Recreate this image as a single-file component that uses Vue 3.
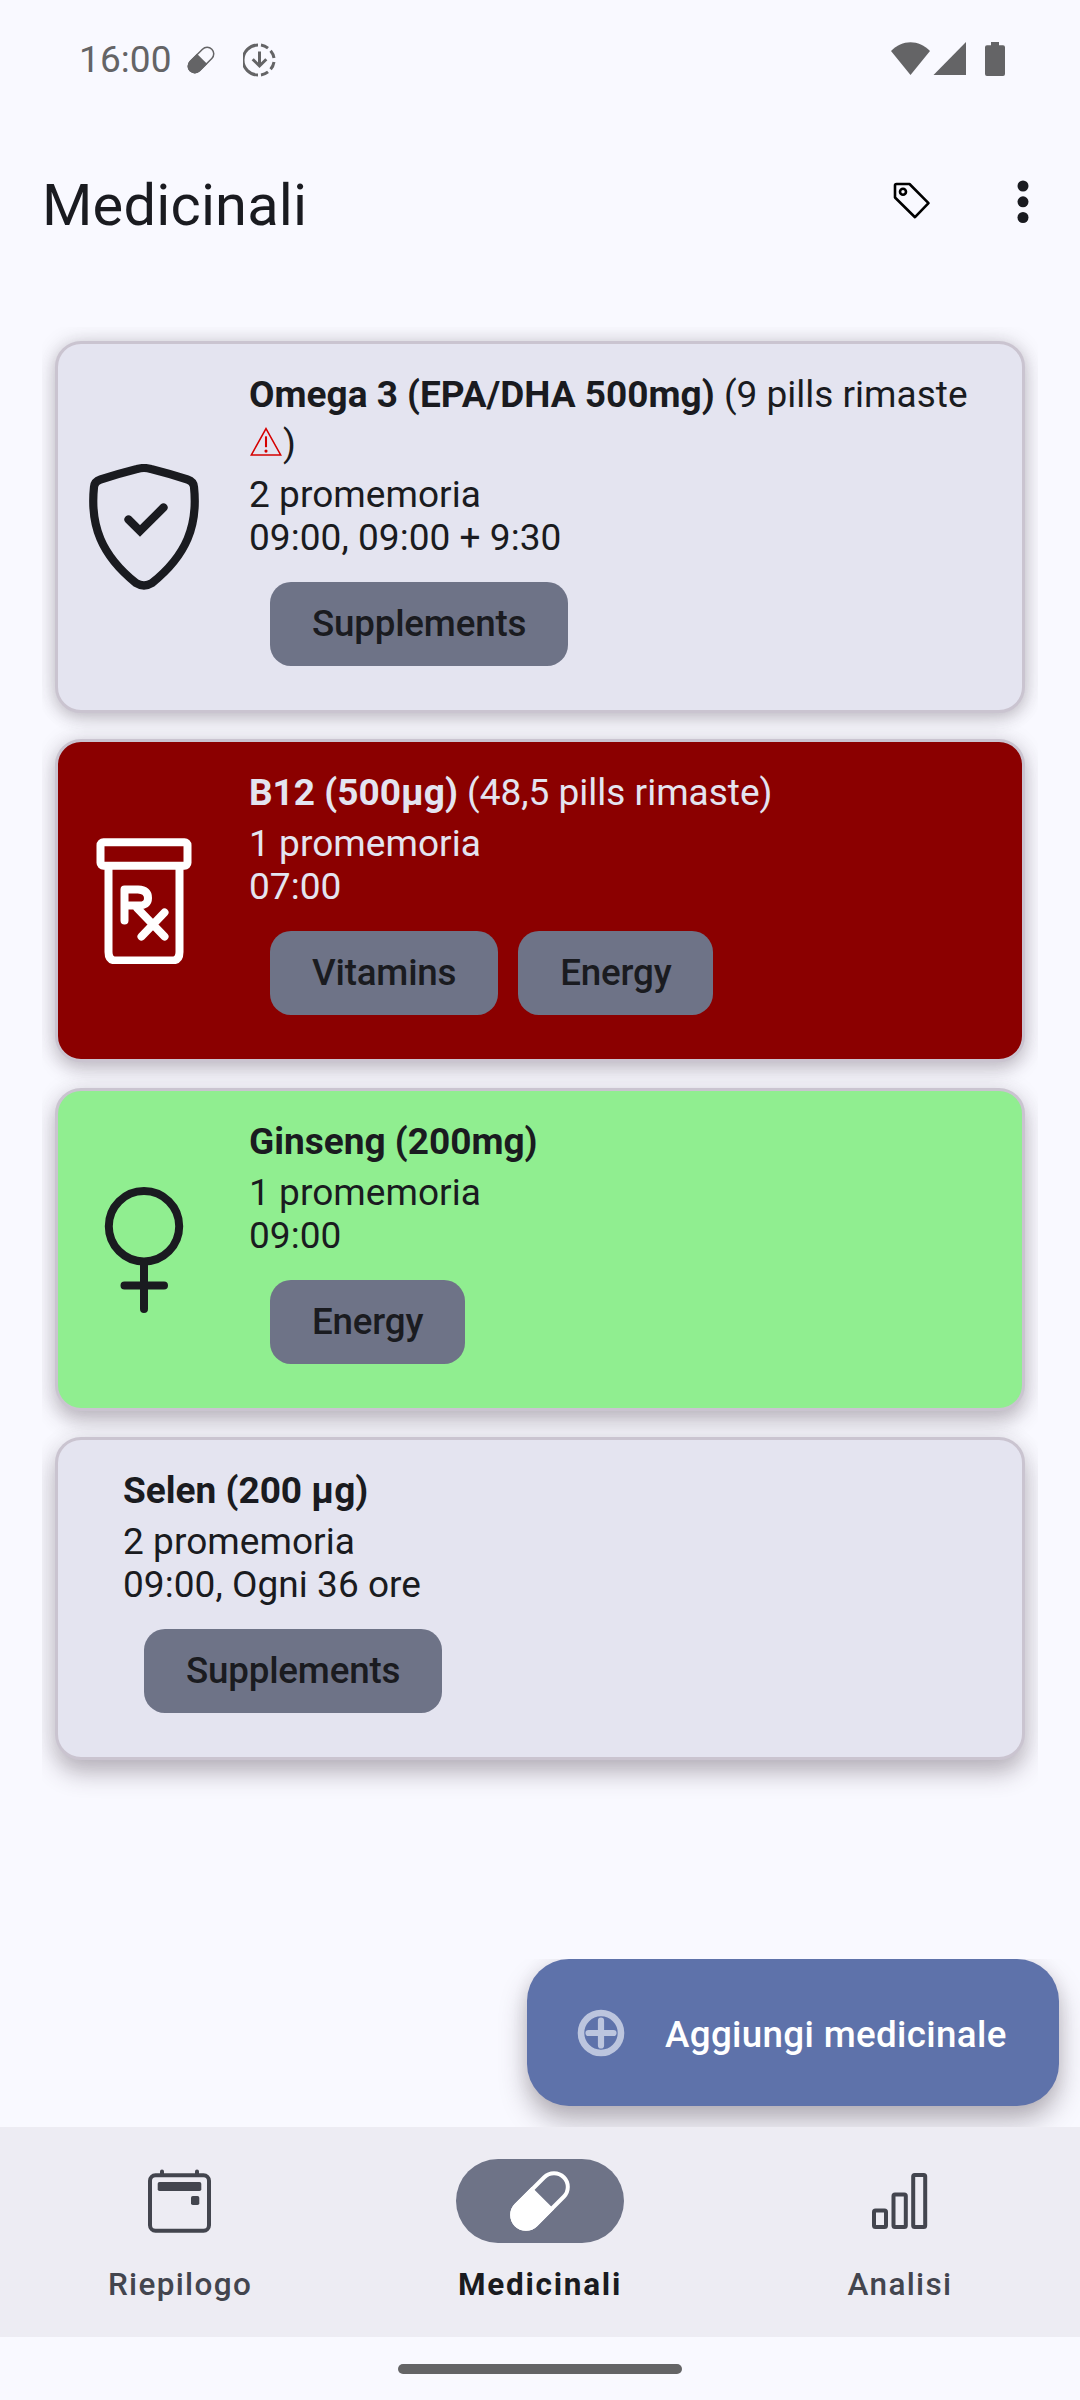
<script setup>
const cards = [
  { name: 'Omega 3 (EPA/DHA 500mg)', stock: ' (9 pills rimaste ', warn: true, count: '2 promemoria', times: '09:00, 09:00 + 9:30', tags: ['Supplements'], icon: 'shield', tone: 'plain' },
  { name: 'B12 (500µg)', stock: ' (48,5 pills rimaste)', count: '1 promemoria', times: '07:00', tags: ['Vitamins', 'Energy'], icon: 'rx', tone: 'red' },
  { name: 'Ginseng (200mg)', stock: '', count: '1 promemoria', times: '09:00', tags: ['Energy'], icon: 'female', tone: 'green' },
  { name: 'Selen (200 µg)', stock: '', count: '2 promemoria', times: '09:00, Ogni 36 ore', tags: ['Supplements'], icon: null, tone: 'plain' },
]
</script>

<template>
  <div class="screen">
    <header class="status">
      <span class="clock">16:00</span>
      <svg class="s-pill" width="28" height="28" viewBox="0 0 28 28">
        <g transform="translate(14 14) rotate(45)">
          <rect x="-6.600" y="-15.300" width="13.200" height="30.600" rx="6.600" fill="none" stroke="#646466" stroke-width="1.500" />
          <path d="M-7.300 -1.500H7.300V8.700A7.300 7.300 0 0 1-7.300 8.700Z" fill="#646466" />
        </g>
      </svg>
      <svg class="s-down" width="33" height="34" viewBox="0 0 33 34" fill="none" stroke="#646466" stroke-width="3">
        <path d="M15 2A15 15 0 0 0 15 32" />
        <path d="M18 2A15 15 0 0 1 25 5.100M27.600 7.700A15 15 0 0 1 31 15M31 19A15 15 0 0 1 27.600 26.300M25 28.900A15 15 0 0 1 18 32" />
        <path d="M16.500 8.500V22M9.700 16.200L16.500 23L23.300 16.200" />
      </svg>
      <span class="grow"></span>
      <svg width="115" height="34" viewBox="0 0 115 34" fill="#646466">
        <path d="M0 9C11 -2.700 28 -2.700 39 9L19.500 33Z" />
        <path d="M42.500 33L75 0V33Z" />
        <path d="M100 0h8v3.200h4a2 2 0 0 1 2 2V32a2 2 0 0 1-2 2H96a2 2 0 0 1-2-2V5.200a2 2 0 0 1 2-2h4Z" />
      </svg>
    </header>

    <div class="appbar">
      <h1>Medicinali</h1>
      <span class="grow"></span>
      <svg class="tag-icon" width="38" height="38" viewBox="0 0 38 38" fill="none" stroke="#000" stroke-width="2.600" stroke-linejoin="round">
        <path d="M3.500 2H16.500L35.500 21.200L22 35.200L2 15.500V3.500Q2 2 3.500 2Z" />
        <circle cx="10" cy="9.700" r="3" />
      </svg>
      <svg width="12" height="44" viewBox="0 0 12 44" fill="#1a1b20">
        <circle cx="6" cy="6" r="5.500" /><circle cx="6" cy="21.800" r="5.500" /><circle cx="6" cy="37.500" r="5.500" />
      </svg>
    </div>

    <main class="list">
      <article v-for="c in cards" :key="c.name" class="card" :class="c.tone">
        <svg v-if="c.icon === 'shield'" class="icon" viewBox="0 0 126 126" fill="none" stroke="#1a1b20" stroke-width="8.200" stroke-linecap="round" stroke-linejoin="round">
          <path d="M56 5Q63 3 70 5Q88 9.500 106.500 15.500Q112.500 17.500 113 23C117 61 106 91 71 119Q63 124 55 119C20 91 9 61 13 23Q13.500 17.500 19.500 15.500Q38 9.500 56 5Z" />
          <path d="M47.500 55.500L59 67L82.500 43.500" stroke-linejoin="miter" />
        </svg>
        <svg v-else-if="c.icon === 'rx'" class="icon" viewBox="0 0 126 126" fill="none" stroke="#fff" stroke-width="8" stroke-linecap="round" stroke-linejoin="round">
          <rect x="19.500" y="4.200" width="87" height="23.500" rx="3" />
          <path d="M27.500 28V114Q27.500 122.500 35.500 122.500H90.500Q98.500 122.500 98.500 114V28" />
          <path d="M43.500 82.500V51.500H57Q67 52 67 60Q67 68 57 67.500H45M56 70L83.500 98.500M83.500 74.500L60.500 98.500" />
        </svg>
        <svg v-else-if="c.icon === 'female'" class="icon" viewBox="0 0 126 126" fill="none" stroke="#1a1b20" stroke-width="8" stroke-linecap="round">
          <circle cx="63" cy="39.200" r="35.200" />
          <path d="M63 76V122M43.500 98.500H83" />
        </svg>
        <div class="body">
          <div class="title"><b>{{ c.name }}</b>{{ c.stock }}<template v-if="c.warn"><br><svg class="warn" viewBox="0 0 31 28" fill="none" stroke="#d50000" stroke-width="1.500"><path d="M15.500 1.500L29.700 27H1.300Z" /><path d="M15.500 9V19.500" stroke-width="2" /><circle cx="15.500" cy="23.300" r="1.500" fill="#d50000" stroke="none" /></svg><span class="paren">)</span></template></div>
          <p>{{ c.count }}</p>
          <p>{{ c.times }}</p>
          <div class="tags"><span v-for="t in c.tags" :key="t" class="chip">{{ t }}</span></div>
        </div>
      </article>
    </main>

    <div class="fab-row">
      <button class="fab">
        <svg width="48" height="48" viewBox="0 0 48 48" fill="none" stroke="#bcc5de">
          <circle cx="24" cy="24" r="20" stroke-width="6.600" />
          <path d="M24 11.500V36.500M11.500 24H36.500" stroke-width="6.200" stroke-linecap="round" />
        </svg>
        <span>Aggiungi medicinale</span>
      </button>
    </div>

    <nav class="nav">
      <div class="item">
        <div class="pill"><svg class="calendar" width="63" height="64" viewBox="0 0 63 64" fill="none" stroke="#43454e" stroke-width="4">
          <rect x="2" y="6.200" width="59" height="55.500" rx="5.500" />
          <path d="M14 6V2.500M49 6V2.500" stroke-linecap="round" />
          <rect x="9.700" y="13" width="43.600" height="9" rx="1.800" fill="#43454e" stroke="none" />
          <rect x="43" y="27" width="8.300" height="9" rx="1.800" fill="#43454e" stroke="none" />
        </svg></div>
        <span>Riepilogo</span>
      </div>
      <div class="item active">
        <div class="pill"><svg width="62" height="62" viewBox="0 0 62 62">
          <g transform="translate(31 31) rotate(45)">
            <rect x="-13.800" y="-33.600" width="27.600" height="67.200" rx="13.800" fill="none" stroke="#fff" stroke-width="4" />
            <path d="M-15.800 -4H15.800V19.800A15.800 15.800 0 0 1-15.800 19.800Z" fill="#fff" />
          </g>
        </svg></div>
        <span>Medicinali</span>
      </div>
      <div class="item">
        <div class="pill"><svg width="56" height="64" viewBox="0 0 56 64" fill="none" stroke="#43454e" stroke-width="4">
          <rect x="2" y="41.500" width="12" height="16.500" rx="1.500" />
          <rect x="21.500" y="25.500" width="12.300" height="32.500" rx="1.500" />
          <rect x="41.200" y="6" width="12" height="52" rx="1.500" />
        </svg></div>
        <span>Analisi</span>
      </div>
    </nav>
    <footer class="home"><div class="handle"></div></footer>
  </div>
</template>

<style>
body { margin: 0; background: #f9f9ff; }
</style>

<style scoped>
.screen { width: 1080px; height: 2400px; display: flex; flex-direction: column; overflow: hidden; background: #f9f9ff; color: #1a1b20; font-family: Roboto, "Liberation Sans", sans-serif; font-size: 37px; }
.grow { flex: 1; }
.status { height: 84px; box-sizing: border-box; padding: 42px 74px 0 79px; display: flex; align-items: flex-start; color: #646466; }
.clock { width: 108px; line-height: 36px; letter-spacing: .1px; }
.s-pill { margin: 4px 28px 0 0; }
.s-down { margin-top: 1px; }
.appbar { height: 243px; box-sizing: border-box; padding: 97px 51px 0 42px; display: flex; align-items: flex-start; }
h1 { margin: -10px 0 0; font-size: 57.750px; font-weight: 400; line-height: 68px; letter-spacing: .2px; }
.tag-icon { margin: 1px 86px 0 0; }
.appbar > svg:last-child { margin-top: -1px; }
.list { height: 1632px; margin: 0 42px; padding: 14px 13px 0; box-sizing: border-box; display: flex; flex-direction: column; gap: 26px; overflow: hidden; }
.card { box-sizing: border-box; flex: none; border: 3px solid #cac4d0; border-radius: 26px; background: #e4e4f0; display: flex; align-items: center; padding: 0 0 0 23px; box-shadow: 0 5px 16px rgba(60, 45, 60, .24), 0 0 22px rgba(60, 50, 60, .14); }
.card:nth-child(2) { box-shadow: 0 7px 18px rgba(60, 45, 60, .26), 0 0 22px rgba(60, 50, 60, .12); }
.card:nth-child(3) { box-shadow: 0 10px 20px rgba(60, 45, 60, .29), 0 0 22px rgba(60, 50, 60, .1); }
.card:nth-child(4) { box-shadow: 0 13px 24px rgba(60, 45, 60, .33), 0 0 22px rgba(60, 50, 60, .07); }
.card.red { background: #8b0000; color: #e4e4f0; }
.card.green { background: #90ee90; }
.icon { width: 126px; height: 126px; flex: none; }
.body { padding: 26px 0 44px 42px; white-space: pre; }
.title { line-height: 49px; margin-bottom: 5px; }
.body p { margin: 0; line-height: 43px; letter-spacing: .05px; }
.warn { width: 32px; height: 29px; margin-left: 1px; }
.paren { margin-left: 1px; }
.tags { display: flex; gap: 20px; margin: 23px 0 0 21px; }
.chip { height: 84px; padding: 0 42px; border-radius: 21px; background: #6e7387; color: #1a1b20; font-size: 36.750px; font-weight: 500; line-height: 84px; letter-spacing: -.2px; }
.fab-row { display: flex; justify-content: flex-end; height: 168px; padding-right: 21px; overflow: hidden; }
.fab { box-sizing: border-box; width: 532px; height: 147px; border: 0; border-radius: 42px; background: #5e72aa; color: #fff; font: 500 36.750px/43px Roboto, sans-serif; letter-spacing: .34px; display: flex; align-items: center; padding: 0 0 0 50px; gap: 40px; box-shadow: 0 15px 27px rgba(60, 50, 60, .36), 0 0 16px rgba(60, 50, 60, .08); }
.fab span { margin-top: 3px; }
.nav { height: 210px; background: #edecf3; display: flex; color: #43454e; }
.item { width: 360px; display: flex; flex-direction: column; align-items: center; font-size: 31.500px; font-weight: 500; letter-spacing: 1.350px; }
.pill { width: 168px; height: 84px; margin-top: 32px; border-radius: 42px; display: flex; align-items: center; justify-content: center; }
.calendar { margin-right: 1px; }
.item > span { margin-top: 23px; line-height: 37px; }
.active { font-weight: 700; color: #1a1b20; letter-spacing: 1.750px; }
.active .pill { background: #6e7387; }
.home { height: 63px; display: flex; justify-content: center; align-items: flex-start; }
.handle { width: 284px; height: 10px; border-radius: 5px; margin-top: 27px; background: #646466; }
</style>
